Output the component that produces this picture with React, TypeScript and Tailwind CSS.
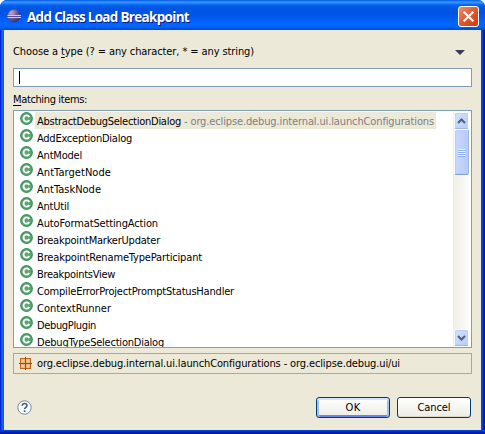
import React from "react";

type Item = { name: string; width: number; detail?: string };

const items: Item[] = [
  { name: "AbstractDebugSelectionDialog", width: 144, detail: "- org.eclipse.debug.internal.ui.launchConfigurations" },
  { name: "AddExceptionDialog", width: 95 },
  { name: "AntModel", width: 45 },
  { name: "AntTargetNode", width: 74 },
  { name: "AntTaskNode", width: 64 },
  { name: "AntUtil", width: 32 },
  { name: "AutoFormatSettingAction", width: 121 },
  { name: "BreakpointMarkerUpdater", width: 123 },
  { name: "BreakpointRenameTypeParticipant", width: 165 },
  { name: "BreakpointsView", width: 78 },
  { name: "CompileErrorProjectPromptStatusHandler", width: 197 },
  { name: "ContextRunner", width: 74 },
  { name: "DebugPlugin", width: 59 },
  { name: "DebugTypeSelectionDialog", width: 127 },
];

/** Text whose letter spacing is adjusted so that it fills the given width. */
function Fit({ width, className = "", children }: { width: number; className?: string; children: React.ReactNode }) {
  const ref = React.useRef<HTMLSpanElement>(null);
  const [spacing, setSpacing] = React.useState(0);
  React.useLayoutEffect(() => {
    const el = ref.current;
    if (!el) return;
    const count = (el.textContent || "").length;
    el.style.letterSpacing = "0px";
    setSpacing((width - el.getBoundingClientRect().width) / count);
    el.style.letterSpacing = "";
  }, [width]);
  return (
    <span ref={ref} className={`inline-block shrink-0 whitespace-pre ${className}`} style={{ letterSpacing: `${spacing}px` }}>
      {children}
    </span>
  );
}

function EclipseIcon() {
  return (
    <svg width="16" height="16" viewBox="0 0 16 16" className="shrink-0">
      <defs>
        <radialGradient id="moon" cx="0.3" cy="0.25" r="0.85">
          <stop offset="0" stopColor="#c3a9c4" />
          <stop offset="0.5" stopColor="#6d5c9c" />
          <stop offset="1" stopColor="#30286a" />
        </radialGradient>
      </defs>
      <circle cx="7" cy="8" r="6.4" fill="url(#moon)" />
      <path d="M0.5 7.5h13.5M0.5 9.5h13.5" stroke="#c8cdea" strokeWidth="1" />
      <path d="M1 8.5h12.5" stroke="#594c91" strokeWidth="1" />
    </svg>
  );
}

function ClassIcon() {
  return (
    <svg width="13" height="13" viewBox="0 0 13 13" className="shrink-0">
      <circle cx="6.5" cy="6.5" r="6.4" fill="#3d9159" />
      <circle cx="6.5" cy="6.5" r="5.2" fill="#5ba673" />
      <path d="M9.3 4.9A3.1 3.1 0 1 0 9.3 8.1" fill="none" stroke="#fff" strokeWidth="1.9" />
    </svg>
  );
}

function PackageIcon() {
  return (
    <svg width="13" height="13" viewBox="0 0 13 13" className="shrink-0">
      <rect x="1.5" y="1.5" width="10" height="10" fill="#e9b87f" stroke="#bd651f" />
      <path d="M6.5 0v13M0 6.5h13" stroke="#8f4c20" />
      <path d="M3 4h2M8 4h2M3 9h2M8 9h2" stroke="#f8dcaf" />
    </svg>
  );
}

function ScrollButton({ down = false }: { down?: boolean }) {
  return (
    <div className="mx-px flex h-[17px] w-[15px] shrink-0 items-center justify-center rounded-[2px] border border-white border-b-[#9eb5e7] bg-linear-to-br from-[#d6e2ff] to-[#b6cbfa] shadow-[inset_0_0_0_1px_#bdd0fb]">
      <svg width="9" height="6" viewBox="0 0 9 6" className={down ? "rotate-180" : ""}>
        <path d="M1 5l3.5-3.5L8 5" fill="none" stroke="#4d6185" strokeWidth="2.1" />
      </svg>
    </div>
  );
}

export default function App() {
  return (
    <div className="h-[434px] w-[485px] overflow-hidden bg-white font-['DejaVu_Sans_Condensed','DejaVu_Sans',sans-serif] text-[11px] leading-[17px] text-black [font-stretch:condensed]">
      <div className="flex h-full flex-col rounded-t-[7px] bg-[#0831d9] bg-[linear-gradient(90deg,#0019cf_0,#0831d9_1px,#166aee_2px,#0855dd_4px,#0855dd_480px,#0047e8_482px,#0019b5_484px,#001080_485px)]">
        <header className="flex h-[30px] shrink-0 items-start rounded-t-[7px] bg-[linear-gradient(180deg,#0058e6_0,#3a93ff_2px,#288eff_3px,#0562ee_5px,#0055e3_8px,#0054e5_14px,#0060fb_21px,#0068ff_25px,#0062f5_27px,#0047d2_30px)] pr-[6px] pl-[7px]">
          <div className="pt-[8px]"><EclipseIcon /></div>
          <div className="pt-[8px] pl-[4px] font-['Open_Sans','Noto_Sans',sans-serif] text-[13.5px] leading-[18px] font-bold text-white [font-stretch:normal] [text-shadow:1px_1px_0_#0a1883]">
            <Fit width={162}>Add Class Load Breakpoint</Fit>
          </div>
          <button className="mt-[6px] ml-auto flex size-[21px] items-center justify-center rounded-[3px] border border-white bg-linear-to-br from-[#ee8d70] via-[#e25632] to-[#c63c0c]">
            <svg width="13" height="13" viewBox="0 0 13 13"><path d="M1.7 1.7l9.6 9.6M11.3 1.7l-9.6 9.6" stroke="#fff" strokeWidth="2.2" /></svg>
          </button>
        </header>

        <main className="mx-[4px] flex h-[400px] flex-col bg-[#ece9d8] pr-[8px] pl-[9px]">
          <div className="flex h-[38px] shrink-0 pt-[13px]">
            <Fit width={241}>Choose a <span className="underline underline-offset-2">t</span>ype (? = any character, * = any string)</Fit>
            <svg width="10" height="5" viewBox="0 0 10 5" className="mt-[7px] mr-[8px] ml-auto"><path d="M0 0h10L5 5z" fill="#39375c" /></svg>
          </div>
          <div className="h-[19px] w-[459px] shrink-0 border border-[#7f9db9] bg-white pt-[2px] pl-[5px]">
            <div className="h-[13px] w-px bg-black" />
          </div>
          <div className="h-[23px] shrink-0 pt-[4px]">
            <Fit width={74}><span className="underline underline-offset-2">M</span>atching items:</Fit>
          </div>

          <div className="flex h-[238px] w-[459px] shrink-0 border border-[#7f9db9] bg-white">
            <ul className="mt-px flex-1 overflow-hidden pl-[6px]">
              {items.map((item) => (
                <li key={item.name} className="flex h-[17px]">
                  <ClassIcon />
                  <div className={`ml-[2px] flex h-[17px] pt-[1px] pl-[2px] ${item.detail ? "w-[401px] bg-[#ece9d8]" : ""}`}>
                    <Fit width={item.width}>{item.name}</Fit>
                    {item.detail && <Fit width={250} className="ml-[3px] text-[#808080]">{item.detail}</Fit>}
                  </div>
                </li>
              ))}
            </ul>
            <div className="mt-px mr-px mb-px flex w-[17px] shrink-0 flex-col bg-linear-to-r from-[#eeede5] to-[#fefefb]">
              <ScrollButton />
              <div className="mx-px flex h-[46px] w-[15px] flex-col items-center justify-center gap-px rounded-[2px] border border-white border-r-[#9eb5e7] border-b-[#839fd8] bg-linear-to-r from-[#c9d8fc] to-[#b7cbf9] shadow-[inset_0_0_0_1px_#b9ccf9]">
                {[0, 1, 2, 3].map((n) => <div key={n} className="h-px w-[7px] bg-[#eef4fe] shadow-[0_1px_0_#8cb0f8]" />)}
              </div>
              <div className="flex-1" />
              <ScrollButton down />
            </div>
          </div>

          <div className="mt-[5px] flex h-[21px] w-[459px] shrink-0 items-center border border-[#aca899] pl-[5px]">
            <PackageIcon />
            <Fit width={363} className="ml-[5px]">org.eclipse.debug.internal.ui.launchConfigurations - org.eclipse.debug.ui/ui</Fit>
          </div>

          <footer className="mt-[23px] flex h-[21px] shrink-0">
            <svg width="15" height="15" viewBox="0 0 15 15" className="mt-[3px] ml-[4px]">
              <circle cx="7.5" cy="7.5" r="6.7" fill="#f8fafc" stroke="#748aa4" />
              <path d="M5.2 5.7c0-3 4.8-2.8 4.8-.1 0 1.6-2.4 1.8-2.4 3.5M7.6 10.3v1.6" fill="none" stroke="#3d5d83" strokeWidth="1.6" />
            </svg>
            <button className="ml-auto flex h-[21px] w-[74px] items-center justify-center rounded-[3px] border border-[#003c74] bg-linear-to-b from-white to-[#ecebe4] shadow-[inset_0_2px_0_#cee7ff,inset_2px_0_0_#a3bff0,inset_-2px_0_0_#a3bff0,inset_0_-2px_0_#6982ee]"><Fit width={15}>OK</Fit></button>
            <button className="mr-[2px] ml-[7px] flex h-[21px] w-[74px] items-center justify-center rounded-[3px] border border-[#003c74] bg-linear-to-b from-white to-[#ecebe4] shadow-[inset_0_-1px_0_#d9d5c9]"><Fit width={33}>Cancel</Fit></button>
          </footer>
        </main>
        <div className="h-[4px] shrink-0 bg-linear-to-b from-[#0750df] via-[#0023b5] to-[#00138c]" />
      </div>
    </div>
  );
}
